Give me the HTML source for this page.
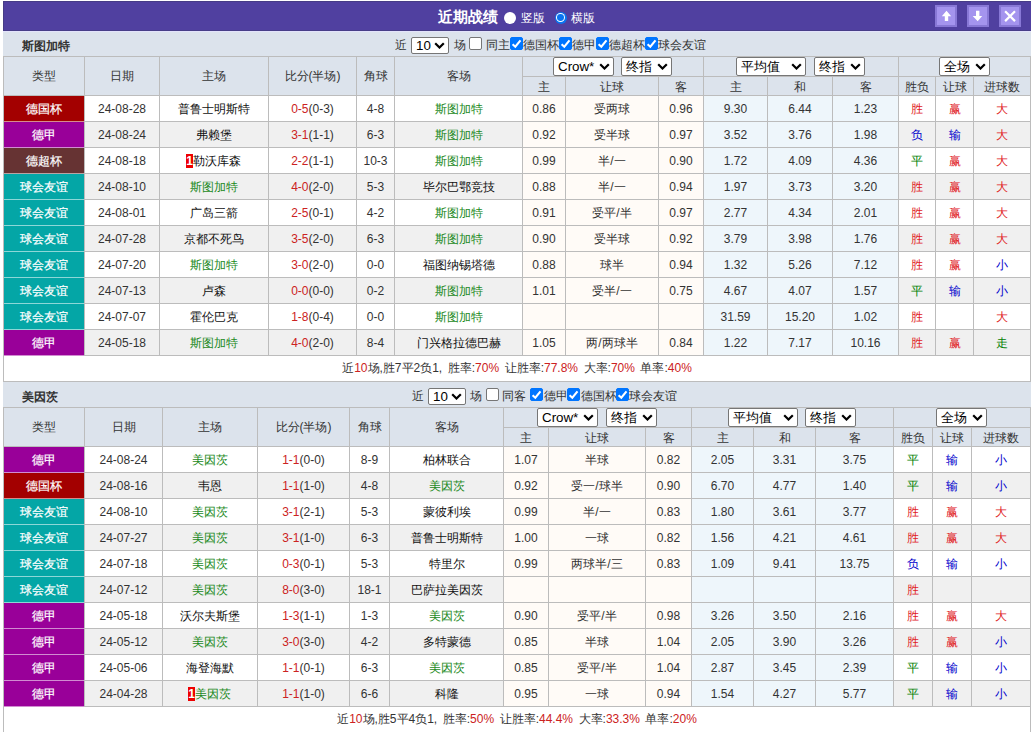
<!DOCTYPE html>
<html><head><meta charset="utf-8"><style>
html,body{margin:0;padding:0;background:#fff;width:1031px;height:732px;overflow:hidden}
body{position:relative;font-family:"Liberation Sans",sans-serif;font-size:12px;color:#333}
body>div{position:absolute;text-align:center;white-space:nowrap;overflow:hidden}
.t{text-align:left!important;line-height:14px;color:#333;overflow:visible!important}
.g{color:#1c8a1c}
.k{color:#111}
.r{color:#cc2222}
.bd{display:inline-block;background:#e00;color:#fff;font-weight:bold;width:7px;height:14px;line-height:14px;vertical-align:0.5px;font-size:12px;text-indent:0;margin-left:-1px}
.sel{background:#fff;border:1px solid #767676;border-radius:2px;text-align:left!important;color:#000}
.st{position:absolute;left:4px;top:0;font-size:13.33px}
.chev{position:absolute;right:3px;top:50%;margin-top:-4px}
.cb{width:13px;height:13px;box-sizing:border-box;border:1px solid #767676;border-radius:2px;background:#fff}
.cb.on{background:#0075ff;border-color:#0075ff}
.cb svg{position:absolute;left:-1px;top:-1px}
.btn{width:22px;height:22px;box-sizing:border-box;border:2px solid #8878d6;background:#a494ee}
.btn svg{left:-2px!important;top:-2px!important}
</style></head><body>
<div style="left:3px;top:1px;width:1028px;height:30px;background:#5040a0;border-top:1px solid #463c86;border-left:1px solid #463c86;box-sizing:border-box"></div>
<div style="left:3px;top:30px;width:1028px;height:1px;background:#483e88"></div>
<div class="t" style="left:438px;top:8px;font-size:15px;font-weight:bold;color:#fff;line-height:18px">近期战绩</div>
<div style="left:504px;top:12px;width:12px;height:12px;border-radius:50%;background:#fff"></div>
<div class="t" style="left:521px;top:10px;color:#fff;line-height:16px">竖版</div>
<div style="left:554.5px;top:11.5px;width:12px;height:12px;border-radius:50%;background:#0a74f0"><div style="position:absolute;left:1.3px;top:1.3px;width:9.4px;height:9.4px;border-radius:50%;background:#fff"></div><div style="position:absolute;left:2.6px;top:2.6px;width:6.8px;height:6.8px;border-radius:50%;background:#0a74f0"></div></div>
<div class="t" style="left:571px;top:10px;color:#fff;line-height:16px">横版</div>
<div class="btn" style="left:935px;top:5px"><svg width="22" height="22" viewBox="0 0 22 22" style="position:absolute;left:0;top:0"><path d="M11.5 5.7L16.2 11.3H13.2V16.1H9.8V11.3H6.8Z" fill="#fff"/></svg></div>
<div class="btn" style="left:967px;top:5px"><svg width="22" height="22" viewBox="0 0 22 22" style="position:absolute;left:0;top:0"><path d="M9 5.7H12.4V11H15.2L10.7 16.2L5.7 11H9Z" fill="#fff"/></svg></div>
<div class="btn" style="left:999px;top:5px"><svg width="22" height="22" viewBox="0 0 22 22" style="position:absolute;left:0;top:0"><path d="M6.1 6.2L16 16.1M16 6.2L6.1 16.1" stroke="#fff" stroke-width="2.2"/></svg></div>
<div style="left:3px;top:31px;width:1028px;height:25px;background:#dce3ec"></div>
<div style="left:3px;top:31px;width:1028px;height:1px;background:#e3e3fb"></div>
<div style="left:22px;top:31px;width:100px;height:25px;line-height:25px;font-weight:bold;color:#333;text-align:left;padding-top:3px;box-sizing:border-box">斯图加特</div>
<div class="t" style="left:395px;top:38px;">近</div><div class="sel" style="left:411px;top:37px;width:36px;height:15px;line-height:15px"><span class="st">10</span><svg class="chev" width="11" height="7" viewBox="0 0 11 7"><path d="M1.2 1.2L5.5 5.5L9.8 1.2" fill="none" stroke="#000" stroke-width="2.2"/></svg></div><div class="t" style="left:454px;top:38px;">场</div><div class="cb" style="left:469px;top:37px"></div><div class="t" style="left:486px;top:38px;">同主</div><div class="cb on" style="left:510px;top:37px"><svg width="13" height="13" viewBox="0 0 13 13"><path d="M2.6 7.2L5.3 9.7L10.5 3.3" fill="none" stroke="#fff" stroke-width="2.1"/></svg></div><div class="t" style="left:523px;top:38px;">德国杯</div><div class="cb on" style="left:559px;top:37px"><svg width="13" height="13" viewBox="0 0 13 13"><path d="M2.6 7.2L5.3 9.7L10.5 3.3" fill="none" stroke="#fff" stroke-width="2.1"/></svg></div><div class="t" style="left:572px;top:38px;">德甲</div><div class="cb on" style="left:596px;top:37px"><svg width="13" height="13" viewBox="0 0 13 13"><path d="M2.6 7.2L5.3 9.7L10.5 3.3" fill="none" stroke="#fff" stroke-width="2.1"/></svg></div><div class="t" style="left:609px;top:38px;">德超杯</div><div class="cb on" style="left:645px;top:37px"><svg width="13" height="13" viewBox="0 0 13 13"><path d="M2.6 7.2L5.3 9.7L10.5 3.3" fill="none" stroke="#fff" stroke-width="2.1"/></svg></div><div class="t" style="left:658px;top:38px;">球会友谊</div>
<div style="left:3px;top:56px;width:1028px;height:326px;background:#bcbcbc"></div>
<div style="left:4px;top:57px;width:80px;height:38px;background:#dce3ec;line-height:38px;color:#333">类型</div>
<div style="left:85px;top:57px;width:74px;height:38px;background:#dce3ec;line-height:38px;color:#333">日期</div>
<div style="left:160px;top:57px;width:108px;height:38px;background:#dce3ec;line-height:38px;color:#333">主场</div>
<div style="left:269px;top:57px;width:87px;height:38px;background:#dce3ec;line-height:38px;color:#333">比分(半场)</div>
<div style="left:357px;top:57px;width:37px;height:38px;background:#dce3ec;line-height:38px;color:#333">角球</div>
<div style="left:395px;top:57px;width:127px;height:38px;background:#dce3ec;line-height:38px;color:#333">客场</div>
<div style="left:523px;top:57px;width:180px;height:19px;background:#dce3ec;line-height:19px;"></div>
<div style="left:704px;top:57px;width:194px;height:19px;background:#dce3ec;line-height:19px;"></div>
<div style="left:899px;top:57px;width:131px;height:19px;background:#dce3ec;line-height:19px;"></div>
<div style="left:523px;top:77px;width:42px;height:18px;background:#dce3ec;line-height:18px;padding-top:1px;box-sizing:border-box;color:#333">主</div>
<div style="left:566px;top:77px;width:92px;height:18px;background:#dce3ec;line-height:18px;padding-top:1px;box-sizing:border-box;color:#333">让球</div>
<div style="left:659px;top:77px;width:44px;height:18px;background:#dce3ec;line-height:18px;padding-top:1px;box-sizing:border-box;color:#333">客</div>
<div style="left:704px;top:77px;width:63px;height:18px;background:#dce3ec;line-height:18px;padding-top:1px;box-sizing:border-box;color:#333">主</div>
<div style="left:768px;top:77px;width:64px;height:18px;background:#dce3ec;line-height:18px;padding-top:1px;box-sizing:border-box;color:#333">和</div>
<div style="left:833px;top:77px;width:65px;height:18px;background:#dce3ec;line-height:18px;padding-top:1px;box-sizing:border-box;color:#333">客</div>
<div style="left:899px;top:77px;width:36px;height:18px;background:#dce3ec;line-height:18px;padding-top:1px;box-sizing:border-box;color:#333">胜负</div>
<div style="left:936px;top:77px;width:37px;height:18px;background:#dce3ec;line-height:18px;padding-top:1px;box-sizing:border-box;color:#333">让球</div>
<div style="left:974px;top:77px;width:56px;height:18px;background:#dce3ec;line-height:18px;padding-top:1px;box-sizing:border-box;color:#333">进球数</div>
<div style="left:4px;top:96px;width:80px;height:25px;background:#a30000;line-height:25px;padding-top:1px;box-sizing:border-box;color:#fff;-webkit-text-stroke:0.2px #fff">德国杯</div>
<div style="left:4px;top:121px;width:80px;height:1px;background:#a30000"></div>
<div style="left:4px;top:121px;width:80px;height:1px;background:rgba(255,255,255,0.55)"></div>
<div style="left:85px;top:96px;width:74px;height:25px;background:#ffffff;line-height:25px;padding-top:1px;box-sizing:border-box;">24-08-28</div>
<div style="left:160px;top:96px;width:108px;height:25px;background:#ffffff;line-height:25px;padding-top:1px;box-sizing:border-box;"><span class="k">普鲁士明斯特</span></div>
<div style="left:269px;top:96px;width:87px;height:25px;background:#ffffff;line-height:25px;padding-top:1px;box-sizing:border-box;"><span class="r">0-5</span>(0-3)</div>
<div style="left:357px;top:96px;width:37px;height:25px;background:#ffffff;line-height:25px;padding-top:1px;box-sizing:border-box;">4-8</div>
<div style="left:395px;top:96px;width:127px;height:25px;background:#ffffff;line-height:25px;padding-top:1px;box-sizing:border-box;"><span class="g">斯图加特</span></div>
<div style="left:523px;top:96px;width:42px;height:25px;background:#fffbf7;line-height:25px;padding-top:1px;box-sizing:border-box;">0.86</div>
<div style="left:566px;top:96px;width:92px;height:25px;background:#fffbf7;line-height:25px;padding-top:1px;box-sizing:border-box;">受两球</div>
<div style="left:659px;top:96px;width:44px;height:25px;background:#fffbf7;line-height:25px;padding-top:1px;box-sizing:border-box;">0.96</div>
<div style="left:704px;top:96px;width:63px;height:25px;background:#eef6fb;line-height:25px;padding-top:1px;box-sizing:border-box;">9.30</div>
<div style="left:768px;top:96px;width:64px;height:25px;background:#eef6fb;line-height:25px;padding-top:1px;box-sizing:border-box;">6.44</div>
<div style="left:833px;top:96px;width:65px;height:25px;background:#eef6fb;line-height:25px;padding-top:1px;box-sizing:border-box;">1.23</div>
<div style="left:899px;top:96px;width:36px;height:25px;background:#ffffff;line-height:25px;padding-top:1px;box-sizing:border-box;color:#e0201c">胜</div>
<div style="left:936px;top:96px;width:37px;height:25px;background:#ffffff;line-height:25px;padding-top:1px;box-sizing:border-box;color:#e0201c">赢</div>
<div style="left:974px;top:96px;width:56px;height:25px;background:#ffffff;line-height:25px;padding-top:1px;box-sizing:border-box;color:#e0201c">大</div>
<div style="left:4px;top:122px;width:80px;height:25px;background:#990099;line-height:25px;padding-top:1px;box-sizing:border-box;color:#fff;-webkit-text-stroke:0.2px #fff">德甲</div>
<div style="left:4px;top:147px;width:80px;height:1px;background:#990099"></div>
<div style="left:4px;top:147px;width:80px;height:1px;background:rgba(255,255,255,0.55)"></div>
<div style="left:85px;top:122px;width:74px;height:25px;background:#f0f0f0;line-height:25px;padding-top:1px;box-sizing:border-box;">24-08-24</div>
<div style="left:160px;top:122px;width:108px;height:25px;background:#f0f0f0;line-height:25px;padding-top:1px;box-sizing:border-box;"><span class="k">弗赖堡</span></div>
<div style="left:269px;top:122px;width:87px;height:25px;background:#f0f0f0;line-height:25px;padding-top:1px;box-sizing:border-box;"><span class="r">3-1</span>(1-1)</div>
<div style="left:357px;top:122px;width:37px;height:25px;background:#f0f0f0;line-height:25px;padding-top:1px;box-sizing:border-box;">6-3</div>
<div style="left:395px;top:122px;width:127px;height:25px;background:#f0f0f0;line-height:25px;padding-top:1px;box-sizing:border-box;"><span class="g">斯图加特</span></div>
<div style="left:523px;top:122px;width:42px;height:25px;background:#fffbf7;line-height:25px;padding-top:1px;box-sizing:border-box;">0.92</div>
<div style="left:566px;top:122px;width:92px;height:25px;background:#fffbf7;line-height:25px;padding-top:1px;box-sizing:border-box;">受半球</div>
<div style="left:659px;top:122px;width:44px;height:25px;background:#fffbf7;line-height:25px;padding-top:1px;box-sizing:border-box;">0.97</div>
<div style="left:704px;top:122px;width:63px;height:25px;background:#eef6fb;line-height:25px;padding-top:1px;box-sizing:border-box;">3.52</div>
<div style="left:768px;top:122px;width:64px;height:25px;background:#eef6fb;line-height:25px;padding-top:1px;box-sizing:border-box;">3.76</div>
<div style="left:833px;top:122px;width:65px;height:25px;background:#eef6fb;line-height:25px;padding-top:1px;box-sizing:border-box;">1.98</div>
<div style="left:899px;top:122px;width:36px;height:25px;background:#f0f0f0;line-height:25px;padding-top:1px;box-sizing:border-box;color:#0000cc">负</div>
<div style="left:936px;top:122px;width:37px;height:25px;background:#f0f0f0;line-height:25px;padding-top:1px;box-sizing:border-box;color:#0000cc">输</div>
<div style="left:974px;top:122px;width:56px;height:25px;background:#f0f0f0;line-height:25px;padding-top:1px;box-sizing:border-box;color:#e0201c">大</div>
<div style="left:4px;top:148px;width:80px;height:25px;background:#663333;line-height:25px;padding-top:1px;box-sizing:border-box;color:#fff;-webkit-text-stroke:0.2px #fff">德超杯</div>
<div style="left:4px;top:173px;width:80px;height:1px;background:#663333"></div>
<div style="left:4px;top:173px;width:80px;height:1px;background:rgba(255,255,255,0.55)"></div>
<div style="left:85px;top:148px;width:74px;height:25px;background:#ffffff;line-height:25px;padding-top:1px;box-sizing:border-box;">24-08-18</div>
<div style="left:160px;top:148px;width:108px;height:25px;background:#ffffff;line-height:25px;padding-top:1px;box-sizing:border-box;"><b class="bd">1</b><span class="k">勒沃库森</span></div>
<div style="left:269px;top:148px;width:87px;height:25px;background:#ffffff;line-height:25px;padding-top:1px;box-sizing:border-box;"><span class="r">2-2</span>(1-1)</div>
<div style="left:357px;top:148px;width:37px;height:25px;background:#ffffff;line-height:25px;padding-top:1px;box-sizing:border-box;">10-3</div>
<div style="left:395px;top:148px;width:127px;height:25px;background:#ffffff;line-height:25px;padding-top:1px;box-sizing:border-box;"><span class="g">斯图加特</span></div>
<div style="left:523px;top:148px;width:42px;height:25px;background:#fffbf7;line-height:25px;padding-top:1px;box-sizing:border-box;">0.99</div>
<div style="left:566px;top:148px;width:92px;height:25px;background:#fffbf7;line-height:25px;padding-top:1px;box-sizing:border-box;">半/一</div>
<div style="left:659px;top:148px;width:44px;height:25px;background:#fffbf7;line-height:25px;padding-top:1px;box-sizing:border-box;">0.90</div>
<div style="left:704px;top:148px;width:63px;height:25px;background:#eef6fb;line-height:25px;padding-top:1px;box-sizing:border-box;">1.72</div>
<div style="left:768px;top:148px;width:64px;height:25px;background:#eef6fb;line-height:25px;padding-top:1px;box-sizing:border-box;">4.09</div>
<div style="left:833px;top:148px;width:65px;height:25px;background:#eef6fb;line-height:25px;padding-top:1px;box-sizing:border-box;">4.36</div>
<div style="left:899px;top:148px;width:36px;height:25px;background:#ffffff;line-height:25px;padding-top:1px;box-sizing:border-box;color:#008000">平</div>
<div style="left:936px;top:148px;width:37px;height:25px;background:#ffffff;line-height:25px;padding-top:1px;box-sizing:border-box;color:#e0201c">赢</div>
<div style="left:974px;top:148px;width:56px;height:25px;background:#ffffff;line-height:25px;padding-top:1px;box-sizing:border-box;color:#e0201c">大</div>
<div style="left:4px;top:174px;width:80px;height:25px;background:#04a6a6;line-height:25px;padding-top:1px;box-sizing:border-box;color:#fff;-webkit-text-stroke:0.2px #fff">球会友谊</div>
<div style="left:4px;top:199px;width:80px;height:1px;background:#04a6a6"></div>
<div style="left:4px;top:199px;width:80px;height:1px;background:rgba(255,255,255,0.55)"></div>
<div style="left:85px;top:174px;width:74px;height:25px;background:#f0f0f0;line-height:25px;padding-top:1px;box-sizing:border-box;">24-08-10</div>
<div style="left:160px;top:174px;width:108px;height:25px;background:#f0f0f0;line-height:25px;padding-top:1px;box-sizing:border-box;"><span class="g">斯图加特</span></div>
<div style="left:269px;top:174px;width:87px;height:25px;background:#f0f0f0;line-height:25px;padding-top:1px;box-sizing:border-box;"><span class="r">4-0</span>(2-0)</div>
<div style="left:357px;top:174px;width:37px;height:25px;background:#f0f0f0;line-height:25px;padding-top:1px;box-sizing:border-box;">5-3</div>
<div style="left:395px;top:174px;width:127px;height:25px;background:#f0f0f0;line-height:25px;padding-top:1px;box-sizing:border-box;"><span class="k">毕尔巴鄂竞技</span></div>
<div style="left:523px;top:174px;width:42px;height:25px;background:#fffbf7;line-height:25px;padding-top:1px;box-sizing:border-box;">0.88</div>
<div style="left:566px;top:174px;width:92px;height:25px;background:#fffbf7;line-height:25px;padding-top:1px;box-sizing:border-box;">半/一</div>
<div style="left:659px;top:174px;width:44px;height:25px;background:#fffbf7;line-height:25px;padding-top:1px;box-sizing:border-box;">0.94</div>
<div style="left:704px;top:174px;width:63px;height:25px;background:#eef6fb;line-height:25px;padding-top:1px;box-sizing:border-box;">1.97</div>
<div style="left:768px;top:174px;width:64px;height:25px;background:#eef6fb;line-height:25px;padding-top:1px;box-sizing:border-box;">3.73</div>
<div style="left:833px;top:174px;width:65px;height:25px;background:#eef6fb;line-height:25px;padding-top:1px;box-sizing:border-box;">3.20</div>
<div style="left:899px;top:174px;width:36px;height:25px;background:#f0f0f0;line-height:25px;padding-top:1px;box-sizing:border-box;color:#e0201c">胜</div>
<div style="left:936px;top:174px;width:37px;height:25px;background:#f0f0f0;line-height:25px;padding-top:1px;box-sizing:border-box;color:#e0201c">赢</div>
<div style="left:974px;top:174px;width:56px;height:25px;background:#f0f0f0;line-height:25px;padding-top:1px;box-sizing:border-box;color:#e0201c">大</div>
<div style="left:4px;top:200px;width:80px;height:25px;background:#04a6a6;line-height:25px;padding-top:1px;box-sizing:border-box;color:#fff;-webkit-text-stroke:0.2px #fff">球会友谊</div>
<div style="left:4px;top:225px;width:80px;height:1px;background:#04a6a6"></div>
<div style="left:4px;top:225px;width:80px;height:1px;background:rgba(255,255,255,0.55)"></div>
<div style="left:85px;top:200px;width:74px;height:25px;background:#ffffff;line-height:25px;padding-top:1px;box-sizing:border-box;">24-08-01</div>
<div style="left:160px;top:200px;width:108px;height:25px;background:#ffffff;line-height:25px;padding-top:1px;box-sizing:border-box;"><span class="k">广岛三箭</span></div>
<div style="left:269px;top:200px;width:87px;height:25px;background:#ffffff;line-height:25px;padding-top:1px;box-sizing:border-box;"><span class="r">2-5</span>(0-1)</div>
<div style="left:357px;top:200px;width:37px;height:25px;background:#ffffff;line-height:25px;padding-top:1px;box-sizing:border-box;">4-2</div>
<div style="left:395px;top:200px;width:127px;height:25px;background:#ffffff;line-height:25px;padding-top:1px;box-sizing:border-box;"><span class="g">斯图加特</span></div>
<div style="left:523px;top:200px;width:42px;height:25px;background:#fffbf7;line-height:25px;padding-top:1px;box-sizing:border-box;">0.91</div>
<div style="left:566px;top:200px;width:92px;height:25px;background:#fffbf7;line-height:25px;padding-top:1px;box-sizing:border-box;">受平/半</div>
<div style="left:659px;top:200px;width:44px;height:25px;background:#fffbf7;line-height:25px;padding-top:1px;box-sizing:border-box;">0.97</div>
<div style="left:704px;top:200px;width:63px;height:25px;background:#eef6fb;line-height:25px;padding-top:1px;box-sizing:border-box;">2.77</div>
<div style="left:768px;top:200px;width:64px;height:25px;background:#eef6fb;line-height:25px;padding-top:1px;box-sizing:border-box;">4.34</div>
<div style="left:833px;top:200px;width:65px;height:25px;background:#eef6fb;line-height:25px;padding-top:1px;box-sizing:border-box;">2.01</div>
<div style="left:899px;top:200px;width:36px;height:25px;background:#ffffff;line-height:25px;padding-top:1px;box-sizing:border-box;color:#e0201c">胜</div>
<div style="left:936px;top:200px;width:37px;height:25px;background:#ffffff;line-height:25px;padding-top:1px;box-sizing:border-box;color:#e0201c">赢</div>
<div style="left:974px;top:200px;width:56px;height:25px;background:#ffffff;line-height:25px;padding-top:1px;box-sizing:border-box;color:#e0201c">大</div>
<div style="left:4px;top:226px;width:80px;height:25px;background:#04a6a6;line-height:25px;padding-top:1px;box-sizing:border-box;color:#fff;-webkit-text-stroke:0.2px #fff">球会友谊</div>
<div style="left:4px;top:251px;width:80px;height:1px;background:#04a6a6"></div>
<div style="left:4px;top:251px;width:80px;height:1px;background:rgba(255,255,255,0.55)"></div>
<div style="left:85px;top:226px;width:74px;height:25px;background:#f0f0f0;line-height:25px;padding-top:1px;box-sizing:border-box;">24-07-28</div>
<div style="left:160px;top:226px;width:108px;height:25px;background:#f0f0f0;line-height:25px;padding-top:1px;box-sizing:border-box;"><span class="k">京都不死鸟</span></div>
<div style="left:269px;top:226px;width:87px;height:25px;background:#f0f0f0;line-height:25px;padding-top:1px;box-sizing:border-box;"><span class="r">3-5</span>(2-0)</div>
<div style="left:357px;top:226px;width:37px;height:25px;background:#f0f0f0;line-height:25px;padding-top:1px;box-sizing:border-box;">6-3</div>
<div style="left:395px;top:226px;width:127px;height:25px;background:#f0f0f0;line-height:25px;padding-top:1px;box-sizing:border-box;"><span class="g">斯图加特</span></div>
<div style="left:523px;top:226px;width:42px;height:25px;background:#fffbf7;line-height:25px;padding-top:1px;box-sizing:border-box;">0.90</div>
<div style="left:566px;top:226px;width:92px;height:25px;background:#fffbf7;line-height:25px;padding-top:1px;box-sizing:border-box;">受半球</div>
<div style="left:659px;top:226px;width:44px;height:25px;background:#fffbf7;line-height:25px;padding-top:1px;box-sizing:border-box;">0.92</div>
<div style="left:704px;top:226px;width:63px;height:25px;background:#eef6fb;line-height:25px;padding-top:1px;box-sizing:border-box;">3.79</div>
<div style="left:768px;top:226px;width:64px;height:25px;background:#eef6fb;line-height:25px;padding-top:1px;box-sizing:border-box;">3.98</div>
<div style="left:833px;top:226px;width:65px;height:25px;background:#eef6fb;line-height:25px;padding-top:1px;box-sizing:border-box;">1.76</div>
<div style="left:899px;top:226px;width:36px;height:25px;background:#f0f0f0;line-height:25px;padding-top:1px;box-sizing:border-box;color:#e0201c">胜</div>
<div style="left:936px;top:226px;width:37px;height:25px;background:#f0f0f0;line-height:25px;padding-top:1px;box-sizing:border-box;color:#e0201c">赢</div>
<div style="left:974px;top:226px;width:56px;height:25px;background:#f0f0f0;line-height:25px;padding-top:1px;box-sizing:border-box;color:#e0201c">大</div>
<div style="left:4px;top:252px;width:80px;height:25px;background:#04a6a6;line-height:25px;padding-top:1px;box-sizing:border-box;color:#fff;-webkit-text-stroke:0.2px #fff">球会友谊</div>
<div style="left:4px;top:277px;width:80px;height:1px;background:#04a6a6"></div>
<div style="left:4px;top:277px;width:80px;height:1px;background:rgba(255,255,255,0.55)"></div>
<div style="left:85px;top:252px;width:74px;height:25px;background:#ffffff;line-height:25px;padding-top:1px;box-sizing:border-box;">24-07-20</div>
<div style="left:160px;top:252px;width:108px;height:25px;background:#ffffff;line-height:25px;padding-top:1px;box-sizing:border-box;"><span class="g">斯图加特</span></div>
<div style="left:269px;top:252px;width:87px;height:25px;background:#ffffff;line-height:25px;padding-top:1px;box-sizing:border-box;"><span class="r">3-0</span>(2-0)</div>
<div style="left:357px;top:252px;width:37px;height:25px;background:#ffffff;line-height:25px;padding-top:1px;box-sizing:border-box;">0-0</div>
<div style="left:395px;top:252px;width:127px;height:25px;background:#ffffff;line-height:25px;padding-top:1px;box-sizing:border-box;"><span class="k">福图纳锡塔德</span></div>
<div style="left:523px;top:252px;width:42px;height:25px;background:#fffbf7;line-height:25px;padding-top:1px;box-sizing:border-box;">0.88</div>
<div style="left:566px;top:252px;width:92px;height:25px;background:#fffbf7;line-height:25px;padding-top:1px;box-sizing:border-box;">球半</div>
<div style="left:659px;top:252px;width:44px;height:25px;background:#fffbf7;line-height:25px;padding-top:1px;box-sizing:border-box;">0.94</div>
<div style="left:704px;top:252px;width:63px;height:25px;background:#eef6fb;line-height:25px;padding-top:1px;box-sizing:border-box;">1.32</div>
<div style="left:768px;top:252px;width:64px;height:25px;background:#eef6fb;line-height:25px;padding-top:1px;box-sizing:border-box;">5.26</div>
<div style="left:833px;top:252px;width:65px;height:25px;background:#eef6fb;line-height:25px;padding-top:1px;box-sizing:border-box;">7.12</div>
<div style="left:899px;top:252px;width:36px;height:25px;background:#ffffff;line-height:25px;padding-top:1px;box-sizing:border-box;color:#e0201c">胜</div>
<div style="left:936px;top:252px;width:37px;height:25px;background:#ffffff;line-height:25px;padding-top:1px;box-sizing:border-box;color:#e0201c">赢</div>
<div style="left:974px;top:252px;width:56px;height:25px;background:#ffffff;line-height:25px;padding-top:1px;box-sizing:border-box;color:#0000cc">小</div>
<div style="left:4px;top:278px;width:80px;height:25px;background:#04a6a6;line-height:25px;padding-top:1px;box-sizing:border-box;color:#fff;-webkit-text-stroke:0.2px #fff">球会友谊</div>
<div style="left:4px;top:303px;width:80px;height:1px;background:#04a6a6"></div>
<div style="left:4px;top:303px;width:80px;height:1px;background:rgba(255,255,255,0.55)"></div>
<div style="left:85px;top:278px;width:74px;height:25px;background:#f0f0f0;line-height:25px;padding-top:1px;box-sizing:border-box;">24-07-13</div>
<div style="left:160px;top:278px;width:108px;height:25px;background:#f0f0f0;line-height:25px;padding-top:1px;box-sizing:border-box;"><span class="k">卢森</span></div>
<div style="left:269px;top:278px;width:87px;height:25px;background:#f0f0f0;line-height:25px;padding-top:1px;box-sizing:border-box;"><span class="r">0-0</span>(0-0)</div>
<div style="left:357px;top:278px;width:37px;height:25px;background:#f0f0f0;line-height:25px;padding-top:1px;box-sizing:border-box;">0-2</div>
<div style="left:395px;top:278px;width:127px;height:25px;background:#f0f0f0;line-height:25px;padding-top:1px;box-sizing:border-box;"><span class="g">斯图加特</span></div>
<div style="left:523px;top:278px;width:42px;height:25px;background:#fffbf7;line-height:25px;padding-top:1px;box-sizing:border-box;">1.01</div>
<div style="left:566px;top:278px;width:92px;height:25px;background:#fffbf7;line-height:25px;padding-top:1px;box-sizing:border-box;">受半/一</div>
<div style="left:659px;top:278px;width:44px;height:25px;background:#fffbf7;line-height:25px;padding-top:1px;box-sizing:border-box;">0.75</div>
<div style="left:704px;top:278px;width:63px;height:25px;background:#eef6fb;line-height:25px;padding-top:1px;box-sizing:border-box;">4.67</div>
<div style="left:768px;top:278px;width:64px;height:25px;background:#eef6fb;line-height:25px;padding-top:1px;box-sizing:border-box;">4.07</div>
<div style="left:833px;top:278px;width:65px;height:25px;background:#eef6fb;line-height:25px;padding-top:1px;box-sizing:border-box;">1.57</div>
<div style="left:899px;top:278px;width:36px;height:25px;background:#f0f0f0;line-height:25px;padding-top:1px;box-sizing:border-box;color:#008000">平</div>
<div style="left:936px;top:278px;width:37px;height:25px;background:#f0f0f0;line-height:25px;padding-top:1px;box-sizing:border-box;color:#0000cc">输</div>
<div style="left:974px;top:278px;width:56px;height:25px;background:#f0f0f0;line-height:25px;padding-top:1px;box-sizing:border-box;color:#0000cc">小</div>
<div style="left:4px;top:304px;width:80px;height:25px;background:#04a6a6;line-height:25px;padding-top:1px;box-sizing:border-box;color:#fff;-webkit-text-stroke:0.2px #fff">球会友谊</div>
<div style="left:4px;top:329px;width:80px;height:1px;background:#04a6a6"></div>
<div style="left:4px;top:329px;width:80px;height:1px;background:rgba(255,255,255,0.55)"></div>
<div style="left:85px;top:304px;width:74px;height:25px;background:#ffffff;line-height:25px;padding-top:1px;box-sizing:border-box;">24-07-07</div>
<div style="left:160px;top:304px;width:108px;height:25px;background:#ffffff;line-height:25px;padding-top:1px;box-sizing:border-box;"><span class="k">霍伦巴克</span></div>
<div style="left:269px;top:304px;width:87px;height:25px;background:#ffffff;line-height:25px;padding-top:1px;box-sizing:border-box;"><span class="r">1-8</span>(0-4)</div>
<div style="left:357px;top:304px;width:37px;height:25px;background:#ffffff;line-height:25px;padding-top:1px;box-sizing:border-box;">0-0</div>
<div style="left:395px;top:304px;width:127px;height:25px;background:#ffffff;line-height:25px;padding-top:1px;box-sizing:border-box;"><span class="g">斯图加特</span></div>
<div style="left:523px;top:304px;width:42px;height:25px;background:#fffbf7;line-height:25px;padding-top:1px;box-sizing:border-box;"></div>
<div style="left:566px;top:304px;width:92px;height:25px;background:#fffbf7;line-height:25px;padding-top:1px;box-sizing:border-box;"></div>
<div style="left:659px;top:304px;width:44px;height:25px;background:#fffbf7;line-height:25px;padding-top:1px;box-sizing:border-box;"></div>
<div style="left:704px;top:304px;width:63px;height:25px;background:#eef6fb;line-height:25px;padding-top:1px;box-sizing:border-box;">31.59</div>
<div style="left:768px;top:304px;width:64px;height:25px;background:#eef6fb;line-height:25px;padding-top:1px;box-sizing:border-box;">15.20</div>
<div style="left:833px;top:304px;width:65px;height:25px;background:#eef6fb;line-height:25px;padding-top:1px;box-sizing:border-box;">1.02</div>
<div style="left:899px;top:304px;width:36px;height:25px;background:#ffffff;line-height:25px;padding-top:1px;box-sizing:border-box;color:#e0201c">胜</div>
<div style="left:936px;top:304px;width:37px;height:25px;background:#ffffff;line-height:25px;padding-top:1px;box-sizing:border-box;color:#333"></div>
<div style="left:974px;top:304px;width:56px;height:25px;background:#ffffff;line-height:25px;padding-top:1px;box-sizing:border-box;color:#e0201c">大</div>
<div style="left:4px;top:330px;width:80px;height:25px;background:#990099;line-height:25px;padding-top:1px;box-sizing:border-box;color:#fff;-webkit-text-stroke:0.2px #fff">德甲</div>
<div style="left:4px;top:355px;width:80px;height:1px;background:#990099"></div>
<div style="left:4px;top:355px;width:80px;height:1px;background:rgba(255,255,255,0.55)"></div>
<div style="left:85px;top:330px;width:74px;height:25px;background:#f0f0f0;line-height:25px;padding-top:1px;box-sizing:border-box;">24-05-18</div>
<div style="left:160px;top:330px;width:108px;height:25px;background:#f0f0f0;line-height:25px;padding-top:1px;box-sizing:border-box;"><span class="g">斯图加特</span></div>
<div style="left:269px;top:330px;width:87px;height:25px;background:#f0f0f0;line-height:25px;padding-top:1px;box-sizing:border-box;"><span class="r">4-0</span>(2-0)</div>
<div style="left:357px;top:330px;width:37px;height:25px;background:#f0f0f0;line-height:25px;padding-top:1px;box-sizing:border-box;">8-4</div>
<div style="left:395px;top:330px;width:127px;height:25px;background:#f0f0f0;line-height:25px;padding-top:1px;box-sizing:border-box;"><span class="k">门兴格拉德巴赫</span></div>
<div style="left:523px;top:330px;width:42px;height:25px;background:#fffbf7;line-height:25px;padding-top:1px;box-sizing:border-box;">1.05</div>
<div style="left:566px;top:330px;width:92px;height:25px;background:#fffbf7;line-height:25px;padding-top:1px;box-sizing:border-box;">两/两球半</div>
<div style="left:659px;top:330px;width:44px;height:25px;background:#fffbf7;line-height:25px;padding-top:1px;box-sizing:border-box;">0.84</div>
<div style="left:704px;top:330px;width:63px;height:25px;background:#eef6fb;line-height:25px;padding-top:1px;box-sizing:border-box;">1.22</div>
<div style="left:768px;top:330px;width:64px;height:25px;background:#eef6fb;line-height:25px;padding-top:1px;box-sizing:border-box;">7.17</div>
<div style="left:833px;top:330px;width:65px;height:25px;background:#eef6fb;line-height:25px;padding-top:1px;box-sizing:border-box;">10.16</div>
<div style="left:899px;top:330px;width:36px;height:25px;background:#f0f0f0;line-height:25px;padding-top:1px;box-sizing:border-box;color:#e0201c">胜</div>
<div style="left:936px;top:330px;width:37px;height:25px;background:#f0f0f0;line-height:25px;padding-top:1px;box-sizing:border-box;color:#e0201c">赢</div>
<div style="left:974px;top:330px;width:56px;height:25px;background:#f0f0f0;line-height:25px;padding-top:1px;box-sizing:border-box;color:#008000">走</div>
<div style="left:4px;top:356px;width:1026px;height:25px;background:#fff;line-height:25px;word-spacing:2.2px">近<span class="r">10</span>场,胜7平2负1, 胜率:<span class="r">70%</span> 让胜率:<span class="r">77.8%</span> 大率:<span class="r">70%</span> 单率:<span class="r">40%</span></div>
<div style="left:3px;top:382px;width:1028px;height:25px;background:#dce3ec"></div>
<div style="left:22px;top:382px;width:100px;height:25px;line-height:25px;font-weight:bold;color:#333;text-align:left;padding-top:3px;box-sizing:border-box">美因茨</div>
<div class="t" style="left:412px;top:389px;">近</div><div class="sel" style="left:428px;top:388px;width:36px;height:15px;line-height:15px"><span class="st">10</span><svg class="chev" width="11" height="7" viewBox="0 0 11 7"><path d="M1.2 1.2L5.5 5.5L9.8 1.2" fill="none" stroke="#000" stroke-width="2.2"/></svg></div><div class="t" style="left:470px;top:389px;">场</div><div class="cb" style="left:486px;top:388px"></div><div class="t" style="left:502px;top:389px;">同客</div><div class="cb on" style="left:530px;top:388px"><svg width="13" height="13" viewBox="0 0 13 13"><path d="M2.6 7.2L5.3 9.7L10.5 3.3" fill="none" stroke="#fff" stroke-width="2.1"/></svg></div><div class="t" style="left:544px;top:389px;">德甲</div><div class="cb on" style="left:567px;top:388px"><svg width="13" height="13" viewBox="0 0 13 13"><path d="M2.6 7.2L5.3 9.7L10.5 3.3" fill="none" stroke="#fff" stroke-width="2.1"/></svg></div><div class="t" style="left:581px;top:389px;">德国杯</div><div class="cb on" style="left:616px;top:388px"><svg width="13" height="13" viewBox="0 0 13 13"><path d="M2.6 7.2L5.3 9.7L10.5 3.3" fill="none" stroke="#fff" stroke-width="2.1"/></svg></div><div class="t" style="left:629px;top:389px;">球会友谊</div>
<div style="left:3px;top:407px;width:1028px;height:326px;background:#bcbcbc"></div>
<div style="left:4px;top:408px;width:80px;height:38px;background:#dce3ec;line-height:38px;color:#333">类型</div>
<div style="left:85px;top:408px;width:77px;height:38px;background:#dce3ec;line-height:38px;color:#333">日期</div>
<div style="left:163px;top:408px;width:94px;height:38px;background:#dce3ec;line-height:38px;color:#333">主场</div>
<div style="left:258px;top:408px;width:91px;height:38px;background:#dce3ec;line-height:38px;color:#333">比分(半场)</div>
<div style="left:350px;top:408px;width:39px;height:38px;background:#dce3ec;line-height:38px;color:#333">角球</div>
<div style="left:390px;top:408px;width:113px;height:38px;background:#dce3ec;line-height:38px;color:#333">客场</div>
<div style="left:504px;top:408px;width:187px;height:19px;background:#dce3ec;line-height:19px;"></div>
<div style="left:692px;top:408px;width:201px;height:19px;background:#dce3ec;line-height:19px;"></div>
<div style="left:894px;top:408px;width:136px;height:19px;background:#dce3ec;line-height:19px;"></div>
<div style="left:504px;top:428px;width:44px;height:18px;background:#dce3ec;line-height:18px;padding-top:1px;box-sizing:border-box;color:#333">主</div>
<div style="left:549px;top:428px;width:96px;height:18px;background:#dce3ec;line-height:18px;padding-top:1px;box-sizing:border-box;color:#333">让球</div>
<div style="left:646px;top:428px;width:45px;height:18px;background:#dce3ec;line-height:18px;padding-top:1px;box-sizing:border-box;color:#333">客</div>
<div style="left:692px;top:428px;width:61px;height:18px;background:#dce3ec;line-height:18px;padding-top:1px;box-sizing:border-box;color:#333">主</div>
<div style="left:754px;top:428px;width:61px;height:18px;background:#dce3ec;line-height:18px;padding-top:1px;box-sizing:border-box;color:#333">和</div>
<div style="left:816px;top:428px;width:77px;height:18px;background:#dce3ec;line-height:18px;padding-top:1px;box-sizing:border-box;color:#333">客</div>
<div style="left:894px;top:428px;width:38px;height:18px;background:#dce3ec;line-height:18px;padding-top:1px;box-sizing:border-box;color:#333">胜负</div>
<div style="left:933px;top:428px;width:38px;height:18px;background:#dce3ec;line-height:18px;padding-top:1px;box-sizing:border-box;color:#333">让球</div>
<div style="left:972px;top:428px;width:58px;height:18px;background:#dce3ec;line-height:18px;padding-top:1px;box-sizing:border-box;color:#333">进球数</div>
<div style="left:4px;top:447px;width:80px;height:25px;background:#990099;line-height:25px;padding-top:1px;box-sizing:border-box;color:#fff;-webkit-text-stroke:0.2px #fff">德甲</div>
<div style="left:4px;top:472px;width:80px;height:1px;background:#990099"></div>
<div style="left:4px;top:472px;width:80px;height:1px;background:rgba(255,255,255,0.55)"></div>
<div style="left:85px;top:447px;width:77px;height:25px;background:#ffffff;line-height:25px;padding-top:1px;box-sizing:border-box;">24-08-24</div>
<div style="left:163px;top:447px;width:94px;height:25px;background:#ffffff;line-height:25px;padding-top:1px;box-sizing:border-box;"><span class="g">美因茨</span></div>
<div style="left:258px;top:447px;width:91px;height:25px;background:#ffffff;line-height:25px;padding-top:1px;box-sizing:border-box;"><span class="r">1-1</span>(0-0)</div>
<div style="left:350px;top:447px;width:39px;height:25px;background:#ffffff;line-height:25px;padding-top:1px;box-sizing:border-box;">8-9</div>
<div style="left:390px;top:447px;width:113px;height:25px;background:#ffffff;line-height:25px;padding-top:1px;box-sizing:border-box;"><span class="k">柏林联合</span></div>
<div style="left:504px;top:447px;width:44px;height:25px;background:#fffbf7;line-height:25px;padding-top:1px;box-sizing:border-box;">1.07</div>
<div style="left:549px;top:447px;width:96px;height:25px;background:#fffbf7;line-height:25px;padding-top:1px;box-sizing:border-box;">半球</div>
<div style="left:646px;top:447px;width:45px;height:25px;background:#fffbf7;line-height:25px;padding-top:1px;box-sizing:border-box;">0.82</div>
<div style="left:692px;top:447px;width:61px;height:25px;background:#eef6fb;line-height:25px;padding-top:1px;box-sizing:border-box;">2.05</div>
<div style="left:754px;top:447px;width:61px;height:25px;background:#eef6fb;line-height:25px;padding-top:1px;box-sizing:border-box;">3.31</div>
<div style="left:816px;top:447px;width:77px;height:25px;background:#eef6fb;line-height:25px;padding-top:1px;box-sizing:border-box;">3.75</div>
<div style="left:894px;top:447px;width:38px;height:25px;background:#ffffff;line-height:25px;padding-top:1px;box-sizing:border-box;color:#008000">平</div>
<div style="left:933px;top:447px;width:38px;height:25px;background:#ffffff;line-height:25px;padding-top:1px;box-sizing:border-box;color:#0000cc">输</div>
<div style="left:972px;top:447px;width:58px;height:25px;background:#ffffff;line-height:25px;padding-top:1px;box-sizing:border-box;color:#0000cc">小</div>
<div style="left:4px;top:473px;width:80px;height:25px;background:#a30000;line-height:25px;padding-top:1px;box-sizing:border-box;color:#fff;-webkit-text-stroke:0.2px #fff">德国杯</div>
<div style="left:4px;top:498px;width:80px;height:1px;background:#a30000"></div>
<div style="left:4px;top:498px;width:80px;height:1px;background:rgba(255,255,255,0.55)"></div>
<div style="left:85px;top:473px;width:77px;height:25px;background:#f0f0f0;line-height:25px;padding-top:1px;box-sizing:border-box;">24-08-16</div>
<div style="left:163px;top:473px;width:94px;height:25px;background:#f0f0f0;line-height:25px;padding-top:1px;box-sizing:border-box;"><span class="k">韦恩</span></div>
<div style="left:258px;top:473px;width:91px;height:25px;background:#f0f0f0;line-height:25px;padding-top:1px;box-sizing:border-box;"><span class="r">1-1</span>(1-0)</div>
<div style="left:350px;top:473px;width:39px;height:25px;background:#f0f0f0;line-height:25px;padding-top:1px;box-sizing:border-box;">4-8</div>
<div style="left:390px;top:473px;width:113px;height:25px;background:#f0f0f0;line-height:25px;padding-top:1px;box-sizing:border-box;"><span class="g">美因茨</span></div>
<div style="left:504px;top:473px;width:44px;height:25px;background:#fffbf7;line-height:25px;padding-top:1px;box-sizing:border-box;">0.92</div>
<div style="left:549px;top:473px;width:96px;height:25px;background:#fffbf7;line-height:25px;padding-top:1px;box-sizing:border-box;">受一/球半</div>
<div style="left:646px;top:473px;width:45px;height:25px;background:#fffbf7;line-height:25px;padding-top:1px;box-sizing:border-box;">0.90</div>
<div style="left:692px;top:473px;width:61px;height:25px;background:#eef6fb;line-height:25px;padding-top:1px;box-sizing:border-box;">6.70</div>
<div style="left:754px;top:473px;width:61px;height:25px;background:#eef6fb;line-height:25px;padding-top:1px;box-sizing:border-box;">4.77</div>
<div style="left:816px;top:473px;width:77px;height:25px;background:#eef6fb;line-height:25px;padding-top:1px;box-sizing:border-box;">1.40</div>
<div style="left:894px;top:473px;width:38px;height:25px;background:#f0f0f0;line-height:25px;padding-top:1px;box-sizing:border-box;color:#008000">平</div>
<div style="left:933px;top:473px;width:38px;height:25px;background:#f0f0f0;line-height:25px;padding-top:1px;box-sizing:border-box;color:#0000cc">输</div>
<div style="left:972px;top:473px;width:58px;height:25px;background:#f0f0f0;line-height:25px;padding-top:1px;box-sizing:border-box;color:#0000cc">小</div>
<div style="left:4px;top:499px;width:80px;height:25px;background:#04a6a6;line-height:25px;padding-top:1px;box-sizing:border-box;color:#fff;-webkit-text-stroke:0.2px #fff">球会友谊</div>
<div style="left:4px;top:524px;width:80px;height:1px;background:#04a6a6"></div>
<div style="left:4px;top:524px;width:80px;height:1px;background:rgba(255,255,255,0.55)"></div>
<div style="left:85px;top:499px;width:77px;height:25px;background:#ffffff;line-height:25px;padding-top:1px;box-sizing:border-box;">24-08-10</div>
<div style="left:163px;top:499px;width:94px;height:25px;background:#ffffff;line-height:25px;padding-top:1px;box-sizing:border-box;"><span class="g">美因茨</span></div>
<div style="left:258px;top:499px;width:91px;height:25px;background:#ffffff;line-height:25px;padding-top:1px;box-sizing:border-box;"><span class="r">3-1</span>(2-1)</div>
<div style="left:350px;top:499px;width:39px;height:25px;background:#ffffff;line-height:25px;padding-top:1px;box-sizing:border-box;">5-3</div>
<div style="left:390px;top:499px;width:113px;height:25px;background:#ffffff;line-height:25px;padding-top:1px;box-sizing:border-box;"><span class="k">蒙彼利埃</span></div>
<div style="left:504px;top:499px;width:44px;height:25px;background:#fffbf7;line-height:25px;padding-top:1px;box-sizing:border-box;">0.99</div>
<div style="left:549px;top:499px;width:96px;height:25px;background:#fffbf7;line-height:25px;padding-top:1px;box-sizing:border-box;">半/一</div>
<div style="left:646px;top:499px;width:45px;height:25px;background:#fffbf7;line-height:25px;padding-top:1px;box-sizing:border-box;">0.83</div>
<div style="left:692px;top:499px;width:61px;height:25px;background:#eef6fb;line-height:25px;padding-top:1px;box-sizing:border-box;">1.80</div>
<div style="left:754px;top:499px;width:61px;height:25px;background:#eef6fb;line-height:25px;padding-top:1px;box-sizing:border-box;">3.61</div>
<div style="left:816px;top:499px;width:77px;height:25px;background:#eef6fb;line-height:25px;padding-top:1px;box-sizing:border-box;">3.77</div>
<div style="left:894px;top:499px;width:38px;height:25px;background:#ffffff;line-height:25px;padding-top:1px;box-sizing:border-box;color:#e0201c">胜</div>
<div style="left:933px;top:499px;width:38px;height:25px;background:#ffffff;line-height:25px;padding-top:1px;box-sizing:border-box;color:#e0201c">赢</div>
<div style="left:972px;top:499px;width:58px;height:25px;background:#ffffff;line-height:25px;padding-top:1px;box-sizing:border-box;color:#e0201c">大</div>
<div style="left:4px;top:525px;width:80px;height:25px;background:#04a6a6;line-height:25px;padding-top:1px;box-sizing:border-box;color:#fff;-webkit-text-stroke:0.2px #fff">球会友谊</div>
<div style="left:4px;top:550px;width:80px;height:1px;background:#04a6a6"></div>
<div style="left:4px;top:550px;width:80px;height:1px;background:rgba(255,255,255,0.55)"></div>
<div style="left:85px;top:525px;width:77px;height:25px;background:#f0f0f0;line-height:25px;padding-top:1px;box-sizing:border-box;">24-07-27</div>
<div style="left:163px;top:525px;width:94px;height:25px;background:#f0f0f0;line-height:25px;padding-top:1px;box-sizing:border-box;"><span class="g">美因茨</span></div>
<div style="left:258px;top:525px;width:91px;height:25px;background:#f0f0f0;line-height:25px;padding-top:1px;box-sizing:border-box;"><span class="r">3-1</span>(1-0)</div>
<div style="left:350px;top:525px;width:39px;height:25px;background:#f0f0f0;line-height:25px;padding-top:1px;box-sizing:border-box;">6-3</div>
<div style="left:390px;top:525px;width:113px;height:25px;background:#f0f0f0;line-height:25px;padding-top:1px;box-sizing:border-box;"><span class="k">普鲁士明斯特</span></div>
<div style="left:504px;top:525px;width:44px;height:25px;background:#fffbf7;line-height:25px;padding-top:1px;box-sizing:border-box;">1.00</div>
<div style="left:549px;top:525px;width:96px;height:25px;background:#fffbf7;line-height:25px;padding-top:1px;box-sizing:border-box;">一球</div>
<div style="left:646px;top:525px;width:45px;height:25px;background:#fffbf7;line-height:25px;padding-top:1px;box-sizing:border-box;">0.82</div>
<div style="left:692px;top:525px;width:61px;height:25px;background:#eef6fb;line-height:25px;padding-top:1px;box-sizing:border-box;">1.56</div>
<div style="left:754px;top:525px;width:61px;height:25px;background:#eef6fb;line-height:25px;padding-top:1px;box-sizing:border-box;">4.21</div>
<div style="left:816px;top:525px;width:77px;height:25px;background:#eef6fb;line-height:25px;padding-top:1px;box-sizing:border-box;">4.61</div>
<div style="left:894px;top:525px;width:38px;height:25px;background:#f0f0f0;line-height:25px;padding-top:1px;box-sizing:border-box;color:#e0201c">胜</div>
<div style="left:933px;top:525px;width:38px;height:25px;background:#f0f0f0;line-height:25px;padding-top:1px;box-sizing:border-box;color:#e0201c">赢</div>
<div style="left:972px;top:525px;width:58px;height:25px;background:#f0f0f0;line-height:25px;padding-top:1px;box-sizing:border-box;color:#e0201c">大</div>
<div style="left:4px;top:551px;width:80px;height:25px;background:#04a6a6;line-height:25px;padding-top:1px;box-sizing:border-box;color:#fff;-webkit-text-stroke:0.2px #fff">球会友谊</div>
<div style="left:4px;top:576px;width:80px;height:1px;background:#04a6a6"></div>
<div style="left:4px;top:576px;width:80px;height:1px;background:rgba(255,255,255,0.55)"></div>
<div style="left:85px;top:551px;width:77px;height:25px;background:#ffffff;line-height:25px;padding-top:1px;box-sizing:border-box;">24-07-18</div>
<div style="left:163px;top:551px;width:94px;height:25px;background:#ffffff;line-height:25px;padding-top:1px;box-sizing:border-box;"><span class="g">美因茨</span></div>
<div style="left:258px;top:551px;width:91px;height:25px;background:#ffffff;line-height:25px;padding-top:1px;box-sizing:border-box;"><span class="r">0-3</span>(0-1)</div>
<div style="left:350px;top:551px;width:39px;height:25px;background:#ffffff;line-height:25px;padding-top:1px;box-sizing:border-box;">5-3</div>
<div style="left:390px;top:551px;width:113px;height:25px;background:#ffffff;line-height:25px;padding-top:1px;box-sizing:border-box;"><span class="k">特里尔</span></div>
<div style="left:504px;top:551px;width:44px;height:25px;background:#fffbf7;line-height:25px;padding-top:1px;box-sizing:border-box;">0.99</div>
<div style="left:549px;top:551px;width:96px;height:25px;background:#fffbf7;line-height:25px;padding-top:1px;box-sizing:border-box;">两球半/三</div>
<div style="left:646px;top:551px;width:45px;height:25px;background:#fffbf7;line-height:25px;padding-top:1px;box-sizing:border-box;">0.83</div>
<div style="left:692px;top:551px;width:61px;height:25px;background:#eef6fb;line-height:25px;padding-top:1px;box-sizing:border-box;">1.09</div>
<div style="left:754px;top:551px;width:61px;height:25px;background:#eef6fb;line-height:25px;padding-top:1px;box-sizing:border-box;">9.41</div>
<div style="left:816px;top:551px;width:77px;height:25px;background:#eef6fb;line-height:25px;padding-top:1px;box-sizing:border-box;">13.75</div>
<div style="left:894px;top:551px;width:38px;height:25px;background:#ffffff;line-height:25px;padding-top:1px;box-sizing:border-box;color:#0000cc">负</div>
<div style="left:933px;top:551px;width:38px;height:25px;background:#ffffff;line-height:25px;padding-top:1px;box-sizing:border-box;color:#0000cc">输</div>
<div style="left:972px;top:551px;width:58px;height:25px;background:#ffffff;line-height:25px;padding-top:1px;box-sizing:border-box;color:#0000cc">小</div>
<div style="left:4px;top:577px;width:80px;height:25px;background:#04a6a6;line-height:25px;padding-top:1px;box-sizing:border-box;color:#fff;-webkit-text-stroke:0.2px #fff">球会友谊</div>
<div style="left:4px;top:602px;width:80px;height:1px;background:#04a6a6"></div>
<div style="left:4px;top:602px;width:80px;height:1px;background:rgba(255,255,255,0.55)"></div>
<div style="left:85px;top:577px;width:77px;height:25px;background:#f0f0f0;line-height:25px;padding-top:1px;box-sizing:border-box;">24-07-12</div>
<div style="left:163px;top:577px;width:94px;height:25px;background:#f0f0f0;line-height:25px;padding-top:1px;box-sizing:border-box;"><span class="g">美因茨</span></div>
<div style="left:258px;top:577px;width:91px;height:25px;background:#f0f0f0;line-height:25px;padding-top:1px;box-sizing:border-box;"><span class="r">8-0</span>(3-0)</div>
<div style="left:350px;top:577px;width:39px;height:25px;background:#f0f0f0;line-height:25px;padding-top:1px;box-sizing:border-box;">18-1</div>
<div style="left:390px;top:577px;width:113px;height:25px;background:#f0f0f0;line-height:25px;padding-top:1px;box-sizing:border-box;"><span class="k">巴萨拉美因茨</span></div>
<div style="left:504px;top:577px;width:44px;height:25px;background:#fffbf7;line-height:25px;padding-top:1px;box-sizing:border-box;"></div>
<div style="left:549px;top:577px;width:96px;height:25px;background:#fffbf7;line-height:25px;padding-top:1px;box-sizing:border-box;"></div>
<div style="left:646px;top:577px;width:45px;height:25px;background:#fffbf7;line-height:25px;padding-top:1px;box-sizing:border-box;"></div>
<div style="left:692px;top:577px;width:61px;height:25px;background:#eef6fb;line-height:25px;padding-top:1px;box-sizing:border-box;"></div>
<div style="left:754px;top:577px;width:61px;height:25px;background:#eef6fb;line-height:25px;padding-top:1px;box-sizing:border-box;"></div>
<div style="left:816px;top:577px;width:77px;height:25px;background:#eef6fb;line-height:25px;padding-top:1px;box-sizing:border-box;"></div>
<div style="left:894px;top:577px;width:38px;height:25px;background:#f0f0f0;line-height:25px;padding-top:1px;box-sizing:border-box;color:#e0201c">胜</div>
<div style="left:933px;top:577px;width:38px;height:25px;background:#f0f0f0;line-height:25px;padding-top:1px;box-sizing:border-box;color:#333"></div>
<div style="left:972px;top:577px;width:58px;height:25px;background:#f0f0f0;line-height:25px;padding-top:1px;box-sizing:border-box;color:#333"></div>
<div style="left:4px;top:603px;width:80px;height:25px;background:#990099;line-height:25px;padding-top:1px;box-sizing:border-box;color:#fff;-webkit-text-stroke:0.2px #fff">德甲</div>
<div style="left:4px;top:628px;width:80px;height:1px;background:#990099"></div>
<div style="left:4px;top:628px;width:80px;height:1px;background:rgba(255,255,255,0.55)"></div>
<div style="left:85px;top:603px;width:77px;height:25px;background:#ffffff;line-height:25px;padding-top:1px;box-sizing:border-box;">24-05-18</div>
<div style="left:163px;top:603px;width:94px;height:25px;background:#ffffff;line-height:25px;padding-top:1px;box-sizing:border-box;"><span class="k">沃尔夫斯堡</span></div>
<div style="left:258px;top:603px;width:91px;height:25px;background:#ffffff;line-height:25px;padding-top:1px;box-sizing:border-box;"><span class="r">1-3</span>(1-1)</div>
<div style="left:350px;top:603px;width:39px;height:25px;background:#ffffff;line-height:25px;padding-top:1px;box-sizing:border-box;">1-3</div>
<div style="left:390px;top:603px;width:113px;height:25px;background:#ffffff;line-height:25px;padding-top:1px;box-sizing:border-box;"><span class="g">美因茨</span></div>
<div style="left:504px;top:603px;width:44px;height:25px;background:#fffbf7;line-height:25px;padding-top:1px;box-sizing:border-box;">0.90</div>
<div style="left:549px;top:603px;width:96px;height:25px;background:#fffbf7;line-height:25px;padding-top:1px;box-sizing:border-box;">受平/半</div>
<div style="left:646px;top:603px;width:45px;height:25px;background:#fffbf7;line-height:25px;padding-top:1px;box-sizing:border-box;">0.98</div>
<div style="left:692px;top:603px;width:61px;height:25px;background:#eef6fb;line-height:25px;padding-top:1px;box-sizing:border-box;">3.26</div>
<div style="left:754px;top:603px;width:61px;height:25px;background:#eef6fb;line-height:25px;padding-top:1px;box-sizing:border-box;">3.50</div>
<div style="left:816px;top:603px;width:77px;height:25px;background:#eef6fb;line-height:25px;padding-top:1px;box-sizing:border-box;">2.16</div>
<div style="left:894px;top:603px;width:38px;height:25px;background:#ffffff;line-height:25px;padding-top:1px;box-sizing:border-box;color:#e0201c">胜</div>
<div style="left:933px;top:603px;width:38px;height:25px;background:#ffffff;line-height:25px;padding-top:1px;box-sizing:border-box;color:#e0201c">赢</div>
<div style="left:972px;top:603px;width:58px;height:25px;background:#ffffff;line-height:25px;padding-top:1px;box-sizing:border-box;color:#e0201c">大</div>
<div style="left:4px;top:629px;width:80px;height:25px;background:#990099;line-height:25px;padding-top:1px;box-sizing:border-box;color:#fff;-webkit-text-stroke:0.2px #fff">德甲</div>
<div style="left:4px;top:654px;width:80px;height:1px;background:#990099"></div>
<div style="left:4px;top:654px;width:80px;height:1px;background:rgba(255,255,255,0.55)"></div>
<div style="left:85px;top:629px;width:77px;height:25px;background:#f0f0f0;line-height:25px;padding-top:1px;box-sizing:border-box;">24-05-12</div>
<div style="left:163px;top:629px;width:94px;height:25px;background:#f0f0f0;line-height:25px;padding-top:1px;box-sizing:border-box;"><span class="g">美因茨</span></div>
<div style="left:258px;top:629px;width:91px;height:25px;background:#f0f0f0;line-height:25px;padding-top:1px;box-sizing:border-box;"><span class="r">3-0</span>(3-0)</div>
<div style="left:350px;top:629px;width:39px;height:25px;background:#f0f0f0;line-height:25px;padding-top:1px;box-sizing:border-box;">4-2</div>
<div style="left:390px;top:629px;width:113px;height:25px;background:#f0f0f0;line-height:25px;padding-top:1px;box-sizing:border-box;"><span class="k">多特蒙德</span></div>
<div style="left:504px;top:629px;width:44px;height:25px;background:#fffbf7;line-height:25px;padding-top:1px;box-sizing:border-box;">0.85</div>
<div style="left:549px;top:629px;width:96px;height:25px;background:#fffbf7;line-height:25px;padding-top:1px;box-sizing:border-box;">半球</div>
<div style="left:646px;top:629px;width:45px;height:25px;background:#fffbf7;line-height:25px;padding-top:1px;box-sizing:border-box;">1.04</div>
<div style="left:692px;top:629px;width:61px;height:25px;background:#eef6fb;line-height:25px;padding-top:1px;box-sizing:border-box;">2.05</div>
<div style="left:754px;top:629px;width:61px;height:25px;background:#eef6fb;line-height:25px;padding-top:1px;box-sizing:border-box;">3.90</div>
<div style="left:816px;top:629px;width:77px;height:25px;background:#eef6fb;line-height:25px;padding-top:1px;box-sizing:border-box;">3.26</div>
<div style="left:894px;top:629px;width:38px;height:25px;background:#f0f0f0;line-height:25px;padding-top:1px;box-sizing:border-box;color:#e0201c">胜</div>
<div style="left:933px;top:629px;width:38px;height:25px;background:#f0f0f0;line-height:25px;padding-top:1px;box-sizing:border-box;color:#e0201c">赢</div>
<div style="left:972px;top:629px;width:58px;height:25px;background:#f0f0f0;line-height:25px;padding-top:1px;box-sizing:border-box;color:#0000cc">小</div>
<div style="left:4px;top:655px;width:80px;height:25px;background:#990099;line-height:25px;padding-top:1px;box-sizing:border-box;color:#fff;-webkit-text-stroke:0.2px #fff">德甲</div>
<div style="left:4px;top:680px;width:80px;height:1px;background:#990099"></div>
<div style="left:4px;top:680px;width:80px;height:1px;background:rgba(255,255,255,0.55)"></div>
<div style="left:85px;top:655px;width:77px;height:25px;background:#ffffff;line-height:25px;padding-top:1px;box-sizing:border-box;">24-05-06</div>
<div style="left:163px;top:655px;width:94px;height:25px;background:#ffffff;line-height:25px;padding-top:1px;box-sizing:border-box;"><span class="k">海登海默</span></div>
<div style="left:258px;top:655px;width:91px;height:25px;background:#ffffff;line-height:25px;padding-top:1px;box-sizing:border-box;"><span class="r">1-1</span>(0-1)</div>
<div style="left:350px;top:655px;width:39px;height:25px;background:#ffffff;line-height:25px;padding-top:1px;box-sizing:border-box;">6-3</div>
<div style="left:390px;top:655px;width:113px;height:25px;background:#ffffff;line-height:25px;padding-top:1px;box-sizing:border-box;"><span class="g">美因茨</span></div>
<div style="left:504px;top:655px;width:44px;height:25px;background:#fffbf7;line-height:25px;padding-top:1px;box-sizing:border-box;">0.85</div>
<div style="left:549px;top:655px;width:96px;height:25px;background:#fffbf7;line-height:25px;padding-top:1px;box-sizing:border-box;">受平/半</div>
<div style="left:646px;top:655px;width:45px;height:25px;background:#fffbf7;line-height:25px;padding-top:1px;box-sizing:border-box;">1.04</div>
<div style="left:692px;top:655px;width:61px;height:25px;background:#eef6fb;line-height:25px;padding-top:1px;box-sizing:border-box;">2.87</div>
<div style="left:754px;top:655px;width:61px;height:25px;background:#eef6fb;line-height:25px;padding-top:1px;box-sizing:border-box;">3.45</div>
<div style="left:816px;top:655px;width:77px;height:25px;background:#eef6fb;line-height:25px;padding-top:1px;box-sizing:border-box;">2.39</div>
<div style="left:894px;top:655px;width:38px;height:25px;background:#ffffff;line-height:25px;padding-top:1px;box-sizing:border-box;color:#008000">平</div>
<div style="left:933px;top:655px;width:38px;height:25px;background:#ffffff;line-height:25px;padding-top:1px;box-sizing:border-box;color:#0000cc">输</div>
<div style="left:972px;top:655px;width:58px;height:25px;background:#ffffff;line-height:25px;padding-top:1px;box-sizing:border-box;color:#0000cc">小</div>
<div style="left:4px;top:681px;width:80px;height:25px;background:#990099;line-height:25px;padding-top:1px;box-sizing:border-box;color:#fff;-webkit-text-stroke:0.2px #fff">德甲</div>
<div style="left:4px;top:706px;width:80px;height:1px;background:#990099"></div>
<div style="left:4px;top:706px;width:80px;height:1px;background:rgba(255,255,255,0.55)"></div>
<div style="left:85px;top:681px;width:77px;height:25px;background:#f0f0f0;line-height:25px;padding-top:1px;box-sizing:border-box;">24-04-28</div>
<div style="left:163px;top:681px;width:94px;height:25px;background:#f0f0f0;line-height:25px;padding-top:1px;box-sizing:border-box;"><b class="bd">1</b><span class="g">美因茨</span></div>
<div style="left:258px;top:681px;width:91px;height:25px;background:#f0f0f0;line-height:25px;padding-top:1px;box-sizing:border-box;"><span class="r">1-1</span>(1-0)</div>
<div style="left:350px;top:681px;width:39px;height:25px;background:#f0f0f0;line-height:25px;padding-top:1px;box-sizing:border-box;">6-6</div>
<div style="left:390px;top:681px;width:113px;height:25px;background:#f0f0f0;line-height:25px;padding-top:1px;box-sizing:border-box;"><span class="k">科隆</span></div>
<div style="left:504px;top:681px;width:44px;height:25px;background:#fffbf7;line-height:25px;padding-top:1px;box-sizing:border-box;">0.95</div>
<div style="left:549px;top:681px;width:96px;height:25px;background:#fffbf7;line-height:25px;padding-top:1px;box-sizing:border-box;">一球</div>
<div style="left:646px;top:681px;width:45px;height:25px;background:#fffbf7;line-height:25px;padding-top:1px;box-sizing:border-box;">0.94</div>
<div style="left:692px;top:681px;width:61px;height:25px;background:#eef6fb;line-height:25px;padding-top:1px;box-sizing:border-box;">1.54</div>
<div style="left:754px;top:681px;width:61px;height:25px;background:#eef6fb;line-height:25px;padding-top:1px;box-sizing:border-box;">4.27</div>
<div style="left:816px;top:681px;width:77px;height:25px;background:#eef6fb;line-height:25px;padding-top:1px;box-sizing:border-box;">5.77</div>
<div style="left:894px;top:681px;width:38px;height:25px;background:#f0f0f0;line-height:25px;padding-top:1px;box-sizing:border-box;color:#008000">平</div>
<div style="left:933px;top:681px;width:38px;height:25px;background:#f0f0f0;line-height:25px;padding-top:1px;box-sizing:border-box;color:#0000cc">输</div>
<div style="left:972px;top:681px;width:58px;height:25px;background:#f0f0f0;line-height:25px;padding-top:1px;box-sizing:border-box;color:#0000cc">小</div>
<div style="left:4px;top:707px;width:1026px;height:25px;background:#fff;line-height:25px;word-spacing:2.2px">近<span class="r">10</span>场,胜5平4负1, 胜率:<span class="r">50%</span> 让胜率:<span class="r">44.4%</span> 大率:<span class="r">33.3%</span> 单率:<span class="r">20%</span></div>
<div class="sel" style="left:553px;top:57px;width:59px;height:17px;line-height:17px"><span class="st">Crow*</span><svg class="chev" width="11" height="7" viewBox="0 0 11 7"><path d="M1.2 1.2L5.5 5.5L9.8 1.2" fill="none" stroke="#000" stroke-width="2.2"/></svg></div>
<div class="sel" style="left:621px;top:57px;width:49px;height:17px;line-height:17px"><span class="st">终指</span><svg class="chev" width="11" height="7" viewBox="0 0 11 7"><path d="M1.2 1.2L5.5 5.5L9.8 1.2" fill="none" stroke="#000" stroke-width="2.2"/></svg></div>
<div class="sel" style="left:736px;top:57px;width:68px;height:17px;line-height:17px"><span class="st">平均值</span><svg class="chev" width="11" height="7" viewBox="0 0 11 7"><path d="M1.2 1.2L5.5 5.5L9.8 1.2" fill="none" stroke="#000" stroke-width="2.2"/></svg></div>
<div class="sel" style="left:814px;top:57px;width:49px;height:17px;line-height:17px"><span class="st">终指</span><svg class="chev" width="11" height="7" viewBox="0 0 11 7"><path d="M1.2 1.2L5.5 5.5L9.8 1.2" fill="none" stroke="#000" stroke-width="2.2"/></svg></div>
<div class="sel" style="left:939px;top:57px;width:49px;height:17px;line-height:17px"><span class="st">全场</span><svg class="chev" width="11" height="7" viewBox="0 0 11 7"><path d="M1.2 1.2L5.5 5.5L9.8 1.2" fill="none" stroke="#000" stroke-width="2.2"/></svg></div>
<div class="sel" style="left:537px;top:408px;width:59px;height:17px;line-height:17px"><span class="st">Crow*</span><svg class="chev" width="11" height="7" viewBox="0 0 11 7"><path d="M1.2 1.2L5.5 5.5L9.8 1.2" fill="none" stroke="#000" stroke-width="2.2"/></svg></div>
<div class="sel" style="left:606px;top:408px;width:49px;height:17px;line-height:17px"><span class="st">终指</span><svg class="chev" width="11" height="7" viewBox="0 0 11 7"><path d="M1.2 1.2L5.5 5.5L9.8 1.2" fill="none" stroke="#000" stroke-width="2.2"/></svg></div>
<div class="sel" style="left:728px;top:408px;width:68px;height:17px;line-height:17px"><span class="st">平均值</span><svg class="chev" width="11" height="7" viewBox="0 0 11 7"><path d="M1.2 1.2L5.5 5.5L9.8 1.2" fill="none" stroke="#000" stroke-width="2.2"/></svg></div>
<div class="sel" style="left:805px;top:408px;width:49px;height:17px;line-height:17px"><span class="st">终指</span><svg class="chev" width="11" height="7" viewBox="0 0 11 7"><path d="M1.2 1.2L5.5 5.5L9.8 1.2" fill="none" stroke="#000" stroke-width="2.2"/></svg></div>
<div class="sel" style="left:936px;top:408px;width:49px;height:17px;line-height:17px"><span class="st">全场</span><svg class="chev" width="11" height="7" viewBox="0 0 11 7"><path d="M1.2 1.2L5.5 5.5L9.8 1.2" fill="none" stroke="#000" stroke-width="2.2"/></svg></div>
</body></html>
